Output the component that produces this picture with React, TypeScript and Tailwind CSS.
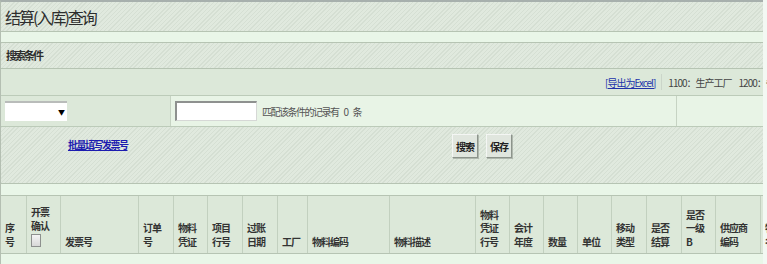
const cols: { w: string; lines: string[]; check?: boolean }[] = [
  { w: "w-[26px]", lines: ["序", "号"] },
  { w: "w-[34px]", lines: ["开票", "确认"], check: true },
  { w: "w-[78px]", lines: ["发票号"] },
  { w: "w-[35px]", lines: ["订单", "号"] },
  { w: "w-[34px]", lines: ["物料", "凭证"] },
  { w: "w-[35px]", lines: ["项目", "行号"] },
  { w: "w-[35px]", lines: ["过账", "日期"] },
  { w: "w-[30px]", lines: ["工厂"] },
  { w: "w-[82px]", lines: ["物料编码"] },
  { w: "w-[86px]", lines: ["物料描述"] },
  { w: "w-[34px]", lines: ["物料", "凭证", "行号"] },
  { w: "w-[34px]", lines: ["会计", "年度"] },
  { w: "w-[34px]", lines: ["数量"] },
  { w: "w-[34px]", lines: ["单位"] },
  { w: "w-[35px]", lines: ["移动", "类型"] },
  { w: "w-[35px]", lines: ["是否", "结算"] },
  { w: "w-[34px]", lines: ["是否", "一级", "B"] },
  { w: "w-[45px]", lines: ["供应商", "编码"] },
  { w: "w-[30px]", lines: ["物料", "名称"] },
];

const font = "font-['Noto_Sans_CJK_SC','Liberation_Sans',sans-serif]";

export default function App() {
  return (
    <div className={`flex h-[264px] w-[767px] overflow-hidden bg-[#f3f8f3] ${font}`}>
      <div className="flex w-[763px] shrink-0 flex-col border-t-2 border-l border-t-[#a7b0ad] border-l-[#b4bfb2] bg-[#e9f5e8]">
        {/* title */}
        <div className="flex h-[30px] items-center border-b border-[#b6c4b3] bg-[repeating-linear-gradient(135deg,#d5dfd3_0px,#d5dfd3_1px,#e0e9de_1px,#e0e9de_3px)] pl-[4px]">
          <h1 className="text-[16px] tracking-[-2px] text-[#2d2d2d]">结算(入库)查询</h1>
        </div>
        <div className="h-[11px] border-b border-[#b6c4b3] bg-[#e9f6e8]" />

        {/* search conditions */}
        <div className="flex h-[26px] items-center border-b border-[#b6c4b3] bg-[repeating-linear-gradient(135deg,#d5dfd3_0px,#d5dfd3_1px,#e0e9de_1px,#e0e9de_3px)] pl-[5px]">
          <span className="text-[11px] font-bold tracking-[-2px] text-[#2d2d2d]">搜索条件</span>
        </div>

        <div className="flex h-[27px] items-center border-b border-[#bccbb9] bg-[#dce8d9] pl-[604px] text-[10px] tracking-[-1px] whitespace-nowrap">
          <a className="text-[#2233aa] underline">[导出为Excel]</a>
          <span className="mx-[6px] h-[16px] w-px shrink-0 bg-[#cbd5c9]" />
          <span className="flex gap-[7px] text-[#444]">
            <span>1100：生产工厂</span>
            <span>1200：备件工厂</span>
          </span>
        </div>

        {/* filter row */}
        <div className="flex h-[31px] border-b border-[#bccbb9]">
          <div className="flex w-[170px] items-center border-r border-[#c6d3c3] bg-[#dce8d9] pl-[4px]">
            <div className="flex h-[20px] w-[62px] items-center justify-end border-t-2 border-[#b9bcba] bg-white pr-[2px] text-[7px] text-black">
              ▼
            </div>
          </div>
          <div className="flex w-[506px] items-center border-r border-[#c6d3c3] bg-[#e8f4e6] pl-[4px]">
            <div className="h-[20px] w-[82px] border-t-2 border-l-2 border-r border-b border-t-[#8e918f] border-l-[#8e918f] border-r-[#d6d8d6] border-b-[#d6d8d6] bg-white" />
            <span className="ml-[5px] flex gap-[5px] text-[10px] tracking-[-1.5px] text-[#555]">
              <span>匹配该条件的记录有</span>
              <span>0</span>
              <span>条</span>
            </span>
          </div>
          <div className="flex-1 bg-[#e8f4e6]" />
        </div>

        {/* actions */}
        <div className="h-[57px] border-b border-[#b6c4b3] bg-[repeating-linear-gradient(135deg,#d5dfd3_0px,#d5dfd3_1px,#e0e9de_1px,#e0e9de_3px)]">
          <div className="flex pt-[7px]">
            <div className="w-[451px] shrink-0 pt-[5px] pl-[67px] text-[10px] leading-[12px]">
              <a className="font-bold tracking-[-1.5px] text-[#1c1cb0] underline">批量填写发票号</a>
            </div>
            <div className="flex gap-[8px]">
              <button className="h-[24px] w-[26px] border border-t-[#f4f6f4] border-l-[#f4f6f4] border-r-[#8c948b] border-b-[#8c948b] bg-[#e0e6de] text-[10px] font-bold tracking-[-1px] text-[#222] shadow-[1px_1px_0_#b0b8ae]">
                搜索
              </button>
              <button className="h-[24px] w-[26px] border border-t-[#f4f6f4] border-l-[#f4f6f4] border-r-[#8c948b] border-b-[#8c948b] bg-[#e0e6de] text-[10px] font-bold tracking-[-1px] text-[#222] shadow-[1px_1px_0_#b0b8ae]">
                保存
              </button>
            </div>
          </div>
        </div>

        <div className="h-[12px] border-b border-[#b6c4b3] bg-[#e9f6e8]" />

        {/* table header */}
        <div className="flex h-[58px] border-b border-[#b6c4b3] bg-[#dce8d9]">
          {cols.map((c, i) => (
            <div
              key={i}
              className={`${c.w} flex shrink-0 flex-col justify-end border-r border-[#c2d0bf] pb-[5px] pl-[4px] text-[10px] leading-[13.5px] font-bold tracking-[-1px] whitespace-nowrap text-[#333]`}
            >
              {c.lines.map((l, j) => (
                <span key={j}>{l}</span>
              ))}
              {c.check && (
                <span className="mt-[2px] mb-[1px] block h-[13px] w-[10px] border border-[#8d908e] bg-[linear-gradient(#f4f4f4,#d8d8d8)]" />
              )}
            </div>
          ))}
        </div>
        <div className="flex-1 bg-[#e9f6e8]" />
      </div>
    </div>
  );
}
